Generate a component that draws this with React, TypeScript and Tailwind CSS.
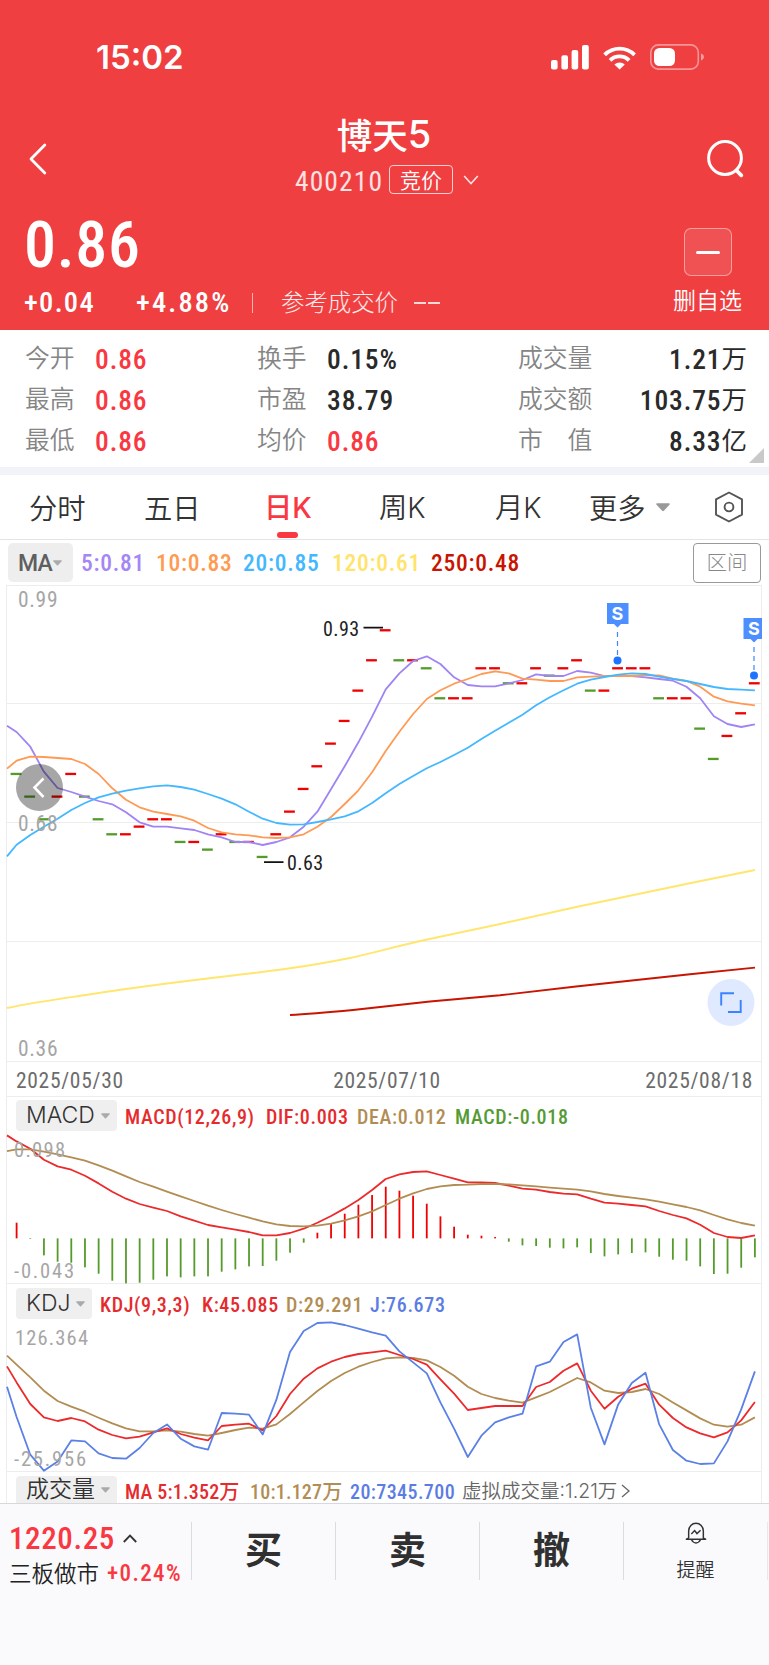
import React from "react";

const START_X = 16.6;
const STEP = 13.672;

type Series = { edge: number; values: number[] };

const linePath = (s: Series, offset: number) =>
  [`7,${s.edge / 3 - offset}`]
    .concat(s.values.map((v, i) => `${(START_X + STEP * i).toFixed(1)},${(v / 3 - offset).toFixed(1)}`))
    .join(" ");

const closes =
  "582g 650g 718g 650r 582r 650g 718g 763g 763r 740r 718r 718r 786g 786r 809g 763r 786g 786r 831g 763r 695r 627r 559r 491r 423r 332r 241r 151r 241g 241r 265g 355g 355r 355r 265r 265r 310g 310r 265r 287g 265r 241r 332g 332r 265r 265r 265r 355g 355r 355r 446g 537g 468r 400r 310r"
    .split(" ")
    .map((t) => ({ y: parseInt(t, 10), up: t.endsWith("r") }));

const ma5: Series = {
  edge: 437,
  values: [456, 500, 575, 624, 636, 650, 663, 673, 697, 727, 740, 740, 745, 750, 763, 772, 786, 786, 795, 786, 772, 740, 695, 627, 559, 487, 410, 328, 280, 243, 229, 252, 292, 315, 319, 319, 310, 300, 283, 288, 288, 273, 278, 288, 288, 288, 292, 297, 302, 320, 355, 409, 432, 441, 433],
};
const ma10: Series = {
  edge: 566,
  values: [542, 530, 531, 534, 537, 552, 582, 625, 659, 682, 695, 702, 709, 722, 744, 757, 763, 766, 772, 774, 772, 763, 740, 711, 672, 631, 577, 513, 455, 402, 357, 331, 311, 297, 282, 274, 280, 296, 299, 303, 303, 292, 290, 288, 288, 288, 286, 286, 296, 303, 320, 350, 364, 371, 376],
};
const ma20: Series = {
  edge: 829,
  values: [794, 765, 740, 716, 690, 669, 652, 641, 632, 625, 619, 616, 621, 629, 642, 656, 673, 695, 716, 729, 734, 733, 726, 718, 709, 694, 669, 640, 612, 588, 565, 546, 525, 503, 477, 452, 428, 404, 376, 352, 331, 311, 299, 291, 284, 280, 282, 290, 297, 303, 312, 321, 327, 329, 331],
};
const macdBars = [399, 448, 497, 516, 519, 533, 552, 573, 581, 579, 570, 560, 563, 560, 560, 546, 539, 530, 529, 513, 489, 459, 429, 400, 372, 345, 316, 291, 303, 318, 342, 380, 411, 435, 438, 442, 456, 467, 469, 474, 476, 473, 490, 500, 494, 490, 488, 501, 510, 513, 530, 553, 552, 534, 503];
const dif: Series = {
  edge: 137,
  values: [155, 177, 210, 230, 240, 258, 281, 306, 327, 343, 354, 364, 380, 393, 406, 413, 420, 427, 437, 437, 430, 417, 399, 379, 356, 331, 301, 268, 254, 247, 245, 256, 267, 278, 278, 280, 288, 297, 300, 307, 312, 314, 327, 339, 342, 346, 350, 364, 376, 386, 405, 430, 442, 445, 437],
};
const dea: Series = {
  edge: 184,
  values: [179, 179, 186, 194, 203, 213, 227, 243, 260, 277, 291, 306, 320, 334, 348, 361, 373, 384, 395, 404, 409, 410, 408, 402, 392, 380, 365, 346, 327, 311, 298, 290, 286, 285, 283, 283, 284, 287, 290, 294, 297, 300, 305, 313, 319, 324, 329, 336, 344, 352, 362, 376, 389, 400, 408],
};
const kLine: Series = {
  edge: 260,
  values: [308, 373, 413, 424, 415, 425, 450, 466, 476, 471, 458, 446, 463, 474, 482, 439, 435, 432, 452, 409, 343, 297, 266, 246, 232, 223, 218, 213, 226, 238, 255, 299, 342, 391, 385, 379, 379, 379, 322, 307, 273, 251, 333, 387, 351, 327, 312, 375, 415, 443, 461, 473, 458, 422, 367],
};
const dLine: Series = {
  edge: 228,
  values: [255, 293, 333, 364, 381, 396, 414, 431, 446, 455, 455, 452, 456, 463, 468, 460, 451, 444, 447, 434, 403, 368, 334, 304, 280, 261, 247, 236, 233, 235, 242, 262, 288, 321, 343, 355, 363, 369, 353, 337, 316, 295, 308, 333, 340, 337, 328, 343, 368, 392, 416, 435, 441, 435, 413],
};
const jLine: Series = {
  edge: 321,
  values: [412, 525, 573, 545, 482, 485, 521, 535, 537, 505, 460, 434, 477, 500, 510, 400, 402, 405, 464, 360, 217, 154, 130, 128, 136, 147, 158, 168, 215, 248, 281, 368, 447, 532, 468, 428, 413, 402, 260, 246, 187, 164, 384, 494, 374, 310, 279, 434, 511, 543, 553, 551, 485, 389, 275],
};

const FACE = "font-[Roboto,'Noto_Sans_CJK_SC',sans-serif] [font-stretch:75%]";
const NUM = `${FACE} tracking-[0.032em]`;

function Line({ s, offset, color }: { s: Series; offset: number; color: string }) {
  return <polyline points={linePath(s, offset)} fill="none" stroke={color} strokeWidth="1.8" strokeLinejoin="round" />;
}

function Caret({ className }: { className: string }) {
  return (
    <svg viewBox="0 0 10 6" className={className}>
      <path d="M0.8 0H9.2Q10.3 0.1 9.6 1L5.6 5.4Q5 6 4.4 5.4L0.4 1Q-0.3 0.1 0.8 0Z" fill="currentColor" />
    </svg>
  );
}

function StatusBar() {
  return (
    <div className="flex h-[114px] items-center pl-[96px]">
      <span className="w-[455px] pt-[1px] font-[Inter,sans-serif] text-[33px] leading-none font-semibold">15:02</span>
      <svg width="154" height="26" viewBox="0 0 154 26">
        <g fill="#fff">
          <rect x="0" y="16" width="6.6" height="9.4" rx="2" />
          <rect x="10.4" y="11.2" width="6.6" height="14.2" rx="2" />
          <rect x="20.6" y="6" width="6.6" height="19.4" rx="2" />
          <rect x="31" y="1" width="6.8" height="24.4" rx="2" />
          <path d="M52.3 9.4a23.4 23.4 0 0 1 32.6 0.1l-2.6 2.7a19.4 19.4 0 0 0-27.3 0z" />
          <path d="M57.7 15a15.6 15.6 0 0 1 21.8 0l-2.8 2.8a11.4 11.4 0 0 0-16.3 0z" />
          <path d="M63.4 20.5a7.6 7.6 0 0 1 10.4 0l-5.2 5.1z" />
          <rect x="103" y="4" width="21" height="18" rx="5.5" />
          <path d="M150 9.6q3 1 3 3.4t-3 3.4z" opacity=".5" />
        </g>
        <rect x="99.8" y="0.9" width="47.5" height="24.2" rx="7.6" fill="none" stroke="#fff" strokeOpacity=".45" strokeWidth="1.6" />
      </svg>
    </div>
  );
}

function Header() {
  return (
    <header className="h-[330px] bg-[#ef3f41] text-white">
      <StatusBar />
      <div className="flex h-[90px] items-center justify-between pr-[25px] pl-[28px]">
        <svg width="36" height="34" viewBox="0 0 36 34" fill="none">
          <path d="M16.8 3 3 17l13.800 14" stroke="#fff" strokeWidth="2.8" strokeLinecap="round" strokeLinejoin="round" />
        </svg>
        <div className="flex flex-col items-center">
          <div className="flex h-[40px] items-center pr-[2px] font-['Noto_Sans_CJK_SC',sans-serif] text-[35.500px] leading-none font-medium">
            博天<span className="font-[Inter] text-[38px] font-medium">5</span>
          </div>
          <div className="flex h-[50px] items-center pt-[1px] pl-[4px]">
            <span className={`${FACE} w-[94px] pt-[5px] text-[27.500px] leading-none tracking-[0.04em] text-white/85`}>400210</span>
            <span className="flex h-[29px] w-[64px] items-center justify-center rounded-[4px] border border-white/75 font-['Noto_Sans_CJK_SC',sans-serif] text-[21px] leading-none font-[350]">
              竞价
            </span>
            <svg className="ml-[10px]" width="16" height="10" viewBox="0 0 16 10" fill="none">
              <path d="M1.200 1 8 8.600 14.800 1" stroke="#fff" strokeOpacity=".85" strokeWidth="1.600" />
            </svg>
          </div>
        </div>
        <svg width="38" height="40" viewBox="0 0 38 40" fill="none" stroke="#fff" strokeWidth="3" strokeLinecap="round">
          <circle cx="19" cy="19" r="16.400" />
          <path d="m30.500 31.500 4.800 4.800" strokeWidth="3.800" />
        </svg>
      </div>
      <div className="flex justify-between pr-[27px] pl-[24px]">
        <div>
          <div className={`${FACE} flex h-[80px] items-center pt-[3px] text-[64px] leading-none font-medium tracking-[0.012em]`}>0.86</div>
          <div className="flex h-[38px] items-center">
            <span className={`${FACE} w-[112px] pt-[1px] text-[28.500px] leading-none font-medium tracking-[0.045em]`}>+0.04</span>
            <span className={`${FACE} w-[116px] pt-[1px] text-[28.500px] leading-none font-medium tracking-[0.075em]`}>+4.88%</span>
            <span className="h-[20px] w-px bg-white/60" />
            <span className="mt-[-3px] ml-[28px] w-[133px] font-['Noto_Sans_CJK_SC',sans-serif] text-[23.400px] leading-none font-light text-white/90">
              参考成交价
            </span>
            <span className="mr-[2px] h-[1.500px] w-[12px] bg-white/80" />
            <span className="h-[1.500px] w-[12px] bg-white/80" />
          </div>
        </div>
        <div className="flex flex-col items-center pt-[24px]">
          <span className="flex h-[48px] w-[48px] items-center justify-center rounded-[7px] border border-white/45 bg-white/10">
            <span className="h-[3px] w-[24px] rounded bg-white" />
          </span>
          <span className="mt-[11px] font-['Noto_Sans_CJK_SC',sans-serif] text-[23px] leading-[24px] font-[350]">删自选</span>
        </div>
      </div>
    </header>
  );
}

const quotes = [
  ["今开", "0.86", "换手", "0.15%", "成交量", "1.21", "万"],
  ["最高", "0.86", "市盈", "38.79", "成交额", "103.75", "万"],
  ["最低", "0.86", "均价", "0.86", "市　值", "8.33", "亿"],
];

function Quotes() {
  const label = "font-['Noto_Sans_CJK_SC',sans-serif] text-[24.800px] font-[350] text-[#858585] leading-none pb-[3px]";
  const value = `${NUM} text-[27.500px] font-medium leading-none pt-[5px]`;
  return (
    <section className="relative h-[137px] pt-[7px]">
      {quotes.map((q, i) => (
        <div key={q[0]} className="flex h-[41px] items-center pr-[22px] pl-[25px]">
          <span className={`${label} w-[70px]`}>{q[0]}</span>
          <span className={`${value} w-[162px] text-[#f93842]`}>{q[1]}</span>
          <span className={`${label} w-[70px]`}>{q[2]}</span>
          <span className={`${value} w-[191px] ${i === 2 ? "text-[#f93842]" : "text-[#2a2a2a]"}`}>{q[3]}</span>
          <span className={label}>{q[4]}</span>
          <span className={`${value} ml-auto flex items-center text-[#2a2a2a]`}>
            {q[5]}
            <span className="text-[25.500px] font-normal tracking-normal">{q[6]}</span>
          </span>
        </div>
      ))}
      <svg className="absolute top-[118px] left-[749px]" width="15" height="15" viewBox="0 0 15 15">
        <path d="M15 0V15H0Z" fill="#c9c9c9" />
      </svg>
    </section>
  );
}

function Tabs() {
  const item = "font-['Noto_Sans_CJK_SC',sans-serif] text-[28.300px] leading-none";
  return (
    <nav className="flex h-[65px] items-center border-b border-[#e4e4e4] pl-[29px] text-[#333]">
      <span className={`${item} w-[115px] font-[350]`}>分时</span>
      <span className={`${item} w-[120px] font-[350]`}>五日</span>
      <span className={`${item} relative w-[115px] font-medium text-[#f93842]`}>
        日<span className="font-[Inter]">K</span>
        <span className="absolute top-[40px] left-[13px] h-[6px] w-[21px] rounded-full bg-[#f93842]" />
      </span>
      <span className={`${item} w-[116px] font-[350]`}>
        周<span className="font-[Inter]">K</span>
      </span>
      <span className={`${item} w-[94px] font-[350]`}>
        月<span className="font-[Inter]">K</span>
      </span>
      <span className={`${item} w-[67px] font-[350]`}>更多</span>
      <Caret className="h-[9px] w-[14px] text-[#999]" />
      <svg className="ml-[44px]" width="30" height="32" viewBox="0 0 30 32" fill="none" stroke="#555" strokeWidth="1.900">
        <path d="M15 1.500 28 8.400V23.600L15 30.500 2 23.600V8.400Z" strokeLinejoin="round" />
        <circle cx="15" cy="16" r="4.400" />
      </svg>
    </nav>
  );
}

function MaRow() {
  const t = `${NUM} text-[23.500px] leading-none font-medium pt-[2px]`;
  return (
    <div className="flex h-[45px] items-center pl-[8px]">
      <span className="flex h-[39px] w-[65px] items-center rounded-[5px] bg-[#eee] pl-[10px]">
        <span className="w-[35px] pt-[2px] font-[Roboto] text-[23px] leading-none font-medium tracking-[-0.04em] text-[#5f5f5f]">MA</span>
        <Caret className="h-[6px] w-[9px] text-[#aaa]" />
      </span>
      <span className={`${t} ml-[8px] w-[75px] text-[#a486f5]`}>5:0.81</span>
      <span className={`${t} w-[87px] text-[#ff9a51]`}>10:0.83</span>
      <span className={`${t} w-[89px] text-[#43b8ff]`}>20:0.85</span>
      <span className={`${t} w-[99px] text-[#ffe36b]`}>120:0.61</span>
      <span className={`${t} text-[#c81400]`}>250:0.48</span>
      <span className="mr-[8px] ml-auto flex h-[40px] w-[68px] items-center justify-center rounded-[4px] border border-[#999] pb-[2px] font-['Noto_Sans_CJK_SC',sans-serif] text-[20.500px] leading-none font-light text-[#888]">
        区间
      </span>
    </div>
  );
}

function SellFlag({ x, y, right }: { x: number; y: number; right: number }) {
  return (
    <g>
      <path d={`M${x - 10.5} ${y}H${x + right}V${y + 21}H${x + 3.5}L${x} ${y + 24.5}L${x - 3.5} ${y + 21}H${x - 10.5}Z`} fill="#4d8fff" />
      <text x={x} y={y + 17.2} textAnchor="middle" className="font-[Inter] text-[18px] font-bold" fill="#fff">
        S
      </text>
      <path d={`M${x} ${y + 29}V${y + 52}`} stroke="#3d86ff" strokeWidth="1.200" strokeDasharray="5 4" />
      <circle cx={x} cy={y + 57.5} r="4" fill="#1f74ff" />
    </g>
  );
}

function PriceChart() {
  return (
    <div className="relative h-[476px] border-t border-[#ededed]">
      <svg width="754" height="475" viewBox="7 0 754 475" className="overflow-visible">
        <path d="M7 117.500H761M7 236.500H761M7 355.500H761" stroke="#ededed" />
        {closes.map((c, i) => (
          <rect key={i} x={START_X + STEP * i - 6} y={c.y / 3 - 7.2} width="10.800" height="2.300" fill={c.up ? "#f00000" : "#559b2c"} />
        ))}
        <Line s={ma5} offset={6} color="#a084f3" />
        <Line s={ma10} offset={6} color="#ff9a55" />
        <Line s={ma20} offset={6} color="#43b8ff" />
        <path d="M7 422C35 416 62 412.500 89 408.500 137 401 186 395 235 389.300 253 387 272 385 290 382.300 310 379.500 330 376 350 372 373 367 396 360.500 419 355.300L500 338L576 321 691 297 755 284" fill="none" stroke="#ffe66e" strokeWidth="1.900" />
        <path d="M290 429C311 428 332 426 353 424L430 415.500 500 409.300 576 400.500 690 388.300 755 381.600" fill="none" stroke="#c81400" strokeWidth="1.900" />
        <path d="M363.500 41.700H383M264 276.200H283.500" stroke="#111" strokeWidth="1.700" />
        <g className="font-[Roboto] text-[20px] [font-stretch:75%]" fill="#222">
          <text x="323" y="49.500" textLength="36">0.93</text>
          <text x="287" y="284" textLength="36">0.63</text>
        </g>
        <SellFlag x={617.5} y={17} right={11} />
        <SellFlag x={754} y={32} right={8} />
        <circle cx="39.500" cy="201.500" r="23.500" fill="#000" fillOpacity=".35" />
        <path d="M43.500 192.500 34.500 201.500 43.500 211" fill="none" stroke="#fff" strokeWidth="2.600" />
        <circle cx="731" cy="416.500" r="23.500" fill="#dfe9ff" />
        <path d="M734 407.300H721.200V419.500M728 426H740.700V414" fill="none" stroke="#3a82ff" strokeWidth="1.900" />
        <g className="font-[Roboto] text-[21.500px] [font-stretch:75%]" fill="#a6a6a6">
          <text x="18" y="20.500" textLength="39.500">0.99</text>
          <text x="18" y="245" textLength="39.500">0.68</text>
          <text x="18" y="469.500" textLength="39.500">0.36</text>
        </g>
      </svg>
    </div>
  );
}

function PanelButton({ label, className }: { label: string; className: string }) {
  return (
    <span className={`flex items-center justify-between bg-[#efefef] pr-[7px] pl-[10px] text-[#333] ${className}`}>
      <span className="font-[Inter,'Noto_Sans_CJK_SC',sans-serif] text-[23px] leading-none font-[350]">{label}</span>
      <Caret className="h-[6px] w-[9px] text-[#aaa]" />
    </span>
  );
}

const IND = `${NUM} text-[20px] leading-none font-medium whitespace-nowrap`;

function MacdPanel() {
  const offset = 42.3;
  const zero = 446 / 3 - offset;
  return (
    <div className="h-[187px] border-t border-[#ededed]">
      <div className="flex h-[35px] items-center pl-[9px]">
        <PanelButton label="MACD" className="mt-[2px] mr-[8px] h-[31px] w-[101px] rounded-[4px]" />
        <span className={`${IND} w-[141px] pt-[4px] text-[#e52b2d]`}>MACD(12,26,9)</span>
        <span className={`${IND} w-[91px] pt-[4px] text-[#e52b2d]`}>DIF:0.003</span>
        <span className={`${IND} w-[98px] pt-[4px] text-[#b28d53]`}>DEA:0.012</span>
        <span className={`${IND} pt-[4px] text-[#559b35]`}>MACD:-0.018</span>
      </div>
      <svg width="754" height="151" viewBox="7 0 754 151" className="overflow-visible">
        {macdBars.map((v, i) => {
          const y = v / 3 - offset;
          return (
            <rect key={i} x={START_X + STEP * i - 0.9} y={Math.min(y, zero)} width="1.800" height={Math.abs(y - zero)} fill={v < 446 ? "#f00000" : "#559b2c"} />
          );
        })}
        <Line s={dif} offset={offset} color="#ec2a2c" />
        <Line s={dea} offset={offset} color="#b28d53" />
        <g className="font-[Roboto] text-[20.500px] [font-stretch:75%]" fill="#a6a6a6">
          <text x="14" y="25" textLength="51">0.098</text>
          <text x="14" y="145.500" textLength="60">-0.043</text>
        </g>
      </svg>
    </div>
  );
}

function KdjPanel() {
  const offset = 40.3;
  return (
    <div className="h-[188px] border-t border-[#ededed]">
      <div className="flex h-[36px] items-center pl-[9px]">
        <PanelButton label="KDJ" className="mt-[3px] mr-[8px] h-[31px] w-[76px] rounded-[4px]" />
        <span className={`${IND} w-[102px] pt-[5px] text-[#e52b2d]`}>KDJ(9,3,3)</span>
        <span className={`${IND} w-[84px] pt-[5px] text-[#e52b2d]`}>K:45.085</span>
        <span className={`${IND} w-[84px] pt-[5px] text-[#b28d53]`}>D:29.291</span>
        <span className={`${IND} pt-[5px] text-[#5b7de3]`}>J:76.673</span>
      </div>
      <svg width="754" height="151" viewBox="7 0 754 151" className="overflow-visible">
        <Line s={dLine} offset={offset} color="#b28d53" />
        <Line s={kLine} offset={offset} color="#ec2a2c" />
        <Line s={jLine} offset={offset} color="#5b80e6" />
        <g className="font-[Roboto] text-[20.500px] [font-stretch:75%]" fill="#a6a6a6">
          <text x="15" y="25" textLength="73">126.364</text>
          <text x="14" y="145.500" textLength="72">-25.956</text>
        </g>
      </svg>
    </div>
  );
}

function VolumeRow() {
  return (
    <div className="flex h-[32px] items-start border-t border-[#ededed] pl-[9px]">
      <PanelButton label="成交量" className="mt-[4px] mr-[8px] h-[27px] w-[101px] shrink-0 rounded-t-[4px]" />
      <span className={`${FACE} mt-[10px] w-[125px] text-[20px] leading-none font-medium tracking-[0.01em] whitespace-nowrap text-[#e52b2d]`}>MA 5:1.352万</span>
      <span className={`${FACE} mt-[10px] w-[100px] text-[20px] leading-none font-medium tracking-[0.01em] whitespace-nowrap text-[#b28d53]`}>10:1.127万</span>
      <span className={`${FACE} mt-[10px] w-[112px] text-[20px] leading-none font-medium tracking-[0.02em] whitespace-nowrap text-[#5b7de3]`}>20:7345.700</span>
      <span className="mt-[10px] font-[Inter,'Noto_Sans_CJK_SC',sans-serif] text-[19.500px] leading-none font-[350] whitespace-nowrap text-[#666]">
        虚拟成交量:1.21万
      </span>
      <svg className="mt-[12px] ml-[4px]" width="9" height="14" viewBox="0 0 9 14" fill="none">
        <path d="M1 1 8 7 1 13" stroke="#666" strokeWidth="1.300" />
      </svg>
    </div>
  );
}

function BottomBar() {
  const action =
    "flex h-[58px] w-[144px] items-center justify-center border-r border-[#dcdce0] pb-[5px] font-['Noto_Sans_CJK_SC',sans-serif] text-[37px] leading-none font-bold text-[#303030]";
  return (
    <footer className="flex h-[162px] items-start border-t border-[#d8d8dc] bg-[#fafafc] pt-[18px]">
      <div className="flex h-[58px] w-[192px] flex-col border-r border-[#dcdce0] pl-[9px]">
        <div className="flex h-[37px] items-center text-[#f93842]">
          <span className={`${FACE} w-[114px] pt-[1px] text-[31px] leading-none font-medium tracking-[0.02em]`}>1220.25</span>
          <svg width="14" height="9" viewBox="0 0 14 9" fill="none">
            <path d="M0.800 8 7 1.600 13.200 8" stroke="#333" strokeWidth="1.800" />
          </svg>
        </div>
        <div className="flex h-[34px] shrink-0 items-center">
          <span className="w-[98px] pt-[2px] font-['Noto_Sans_CJK_SC',sans-serif] text-[22.500px] leading-none font-[350] text-[#222]">三板做市</span>
          <span className={`${FACE} pt-[5px] text-[23px] leading-none font-medium tracking-[0.06em] text-[#f93842]`}>+0.24%</span>
        </div>
      </div>
      <div className={action}>买</div>
      <div className={action}>卖</div>
      <div className={action}>撤</div>
      <div className="flex h-[58px] w-[144px] flex-col items-center border-r border-[#e8e8ec]">
        <svg width="26" height="27" viewBox="0 0 26 27" fill="none" stroke="#333" strokeWidth="1.800">
          <path d="M4 19.800V11A9 9.500 0 0 1 22 11V19.800L24.800 21.200H1.200L4 19.800" strokeLinejoin="round" />
          <path d="M7.300 21.500Q9.500 25.700 13 25.700T18.700 21.500M7.300 14.600 11.300 10.500 14.200 14.200 18.600 10.200" />
        </svg>
        <span className="mt-[14px] font-['Noto_Sans_CJK_SC',sans-serif] text-[19px] leading-[22px] font-[350] text-[#333]">提醒</span>
      </div>
    </footer>
  );
}

export default function App() {
  return (
    <main className="h-[1665px] w-[769px] overflow-hidden bg-white font-['Noto_Sans_CJK_SC',sans-serif]">
      <Header />
      <Quotes />
      <div className="h-[8px] bg-[#f2f3f8]" />
      <Tabs />
      <MaRow />
      <section className="mx-[6px] w-[756px] border-x border-[#ededed]">
        <PriceChart />
        <div className="border-t border-[#ededed]">
          <div className={`${NUM} flex h-[34px] items-center justify-between pt-[3px] pr-[8px] pl-[9px] text-[21.500px] leading-none text-[#6c6c6c]`}>
            <span>2025/05/30</span>
            <span className="pl-[5px]">2025/07/10</span>
            <span>2025/08/18</span>
          </div>
        </div>
        <MacdPanel />
        <KdjPanel />
        <VolumeRow />
      </section>
      <BottomBar />
    </main>
  );
}
